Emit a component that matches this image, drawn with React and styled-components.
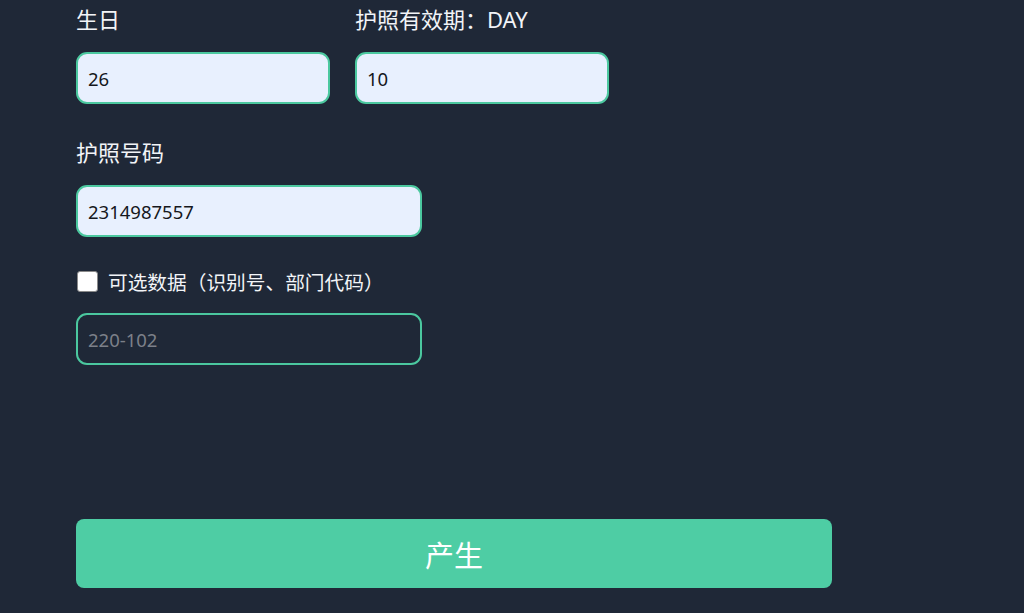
import React from "react";
import styled, { createGlobalStyle } from "styled-components";

const Global = createGlobalStyle`
  html, body { margin: 0; padding: 0; background: #1f2837; }
  body { font-family: "Noto Sans", "Noto Sans CJK SC", sans-serif; }
  * { box-sizing: border-box; }
`;

const Page = styled.div`
  min-height: 613px;
  background: #1f2837;
  padding: 4px 0 0 76px;
`;

const Form = styled.form`
  display: flex;
  flex-direction: column;
  width: 756px;
`;

const Row = styled.div`
  display: flex;
  gap: 25px;
  margin-bottom: ${(p) => p.$mb || 0}px;
`;

const Field = styled.div`
  display: flex;
  flex-direction: column;
  gap: 18px;
`;

const Label = styled.label`
  color: #f2f4f7;
  font-family: "Noto Sans", "Noto Sans CJK SC", sans-serif;
  font-size: 22px;
  line-height: 30px;
  height: 30px;
`;

const Input = styled.input`
  width: ${(p) => p.$w}px;
  height: 52px;
  border: 2px solid #4bc89f;
  border-radius: 11px;
  padding: 0 10px;
  font-family: "Noto Sans", "Noto Sans CJK SC", sans-serif;
  font-size: 18.5px;
  color: #15171c;
  background: ${(p) => (p.$filled ? "#e8f0fe" : "transparent")};
  outline: none;
  &::placeholder { color: #7c8089; }
`;

const CheckRow = styled.label`
  display: flex;
  align-items: center;
  gap: 10px;
  height: 24px;
  margin: 32px 0 20px;
  color: #f2f4f7;
  font-size: 19.7px;
  font-family: "Noto Sans", "Noto Sans CJK SC", sans-serif;
`;

const Check = styled.input`
  appearance: none;
  margin: 0 0 0 1px;
  width: 21px;
  height: 21px;
  background: #ffffff;
  border: 1px solid #8a8a8a;
  border-radius: 3px;
`;

const Button = styled.button`
  margin-top: 154px;
  width: 756px;
  height: 69px;
  border: none;
  border-radius: 8px;
  background: #4ecda4;
  color: #ffffff;
  font-family: "Noto Sans CJK SC", sans-serif;
  font-size: 29px;
  cursor: pointer;
`;

export default function App() {
  return (
    <>
      <Global />
      <Page>
        <Form onSubmit={(e) => e.preventDefault()}>
          <Row $mb={33}>
            <Field>
              <Label>生日</Label>
              <Input $w={254} $filled defaultValue="26" />
            </Field>
            <Field>
              <Label>护照有效期：DAY</Label>
              <Input $w={254} $filled defaultValue="10" />
            </Field>
          </Row>
          <Field>
            <Label>护照号码</Label>
            <Input $w={346} $filled defaultValue="2314987557" />
          </Field>
          <CheckRow>
            <Check type="checkbox" />
            可选数据（识别号、部门代码）
          </CheckRow>
          <Input $w={346} placeholder="220-102" />
          <Button type="button">产生</Button>
        </Form>
      </Page>
    </>
  );
}
